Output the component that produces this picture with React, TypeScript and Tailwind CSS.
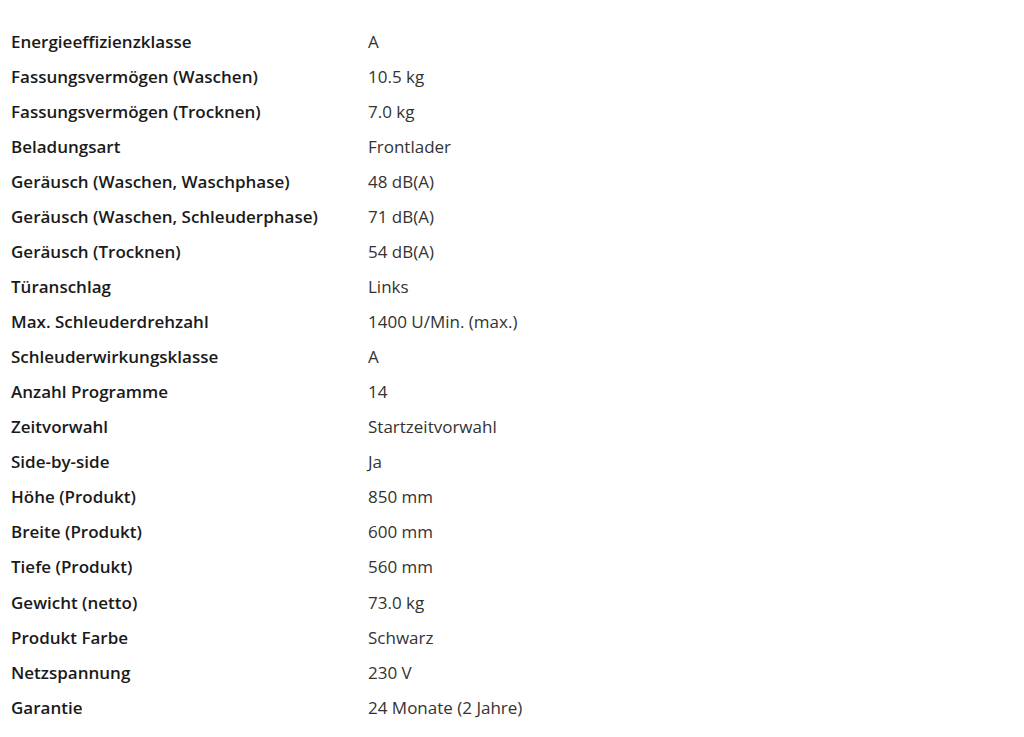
const specs = [
  ['Energieeffizienzklasse', 'A'],
  ['Fassungsvermögen (Waschen)', '10.5 kg'],
  ['Fassungsvermögen (Trocknen)', '7.0 kg'],
  ['Beladungsart', 'Frontlader'],
  ['Geräusch (Waschen, Waschphase)', '48 dB(A)'],
  ['Geräusch (Waschen, Schleuderphase)', '71 dB(A)'],
  ['Geräusch (Trocknen)', '54 dB(A)'],
  ['Türanschlag', 'Links'],
  ['Max. Schleuderdrehzahl', '1400 U/Min. (max.)'],
  ['Schleuderwirkungsklasse', 'A'],
  ['Anzahl Programme', '14'],
  ['Zeitvorwahl', 'Startzeitvorwahl'],
  ['Side-by-side', 'Ja'],
  ['Höhe (Produkt)', '850 mm'],
  ['Breite (Produkt)', '600 mm'],
  ['Tiefe (Produkt)', '560 mm'],
  ['Gewicht (netto)', '73.0 kg'],
  ['Produkt Farbe', 'Schwarz'],
  ['Netzspannung', '230 V'],
  ['Garantie', '24 Monate (2 Jahre)'],
];

export default function App() {
  return (
    <div className="min-h-[737px] bg-white pt-[24px] font-['Open_Sans',sans-serif] text-[17px]">
      {specs.map(([label, value]) => (
        <div key={label} className="flex h-[35.06px] items-center">
          <div className="w-[368px] pl-[11px] font-semibold text-[#1a1a1a]">{label}</div>
          <div className="text-[#333]">{value}</div>
        </div>
      ))}
    </div>
  );
}
